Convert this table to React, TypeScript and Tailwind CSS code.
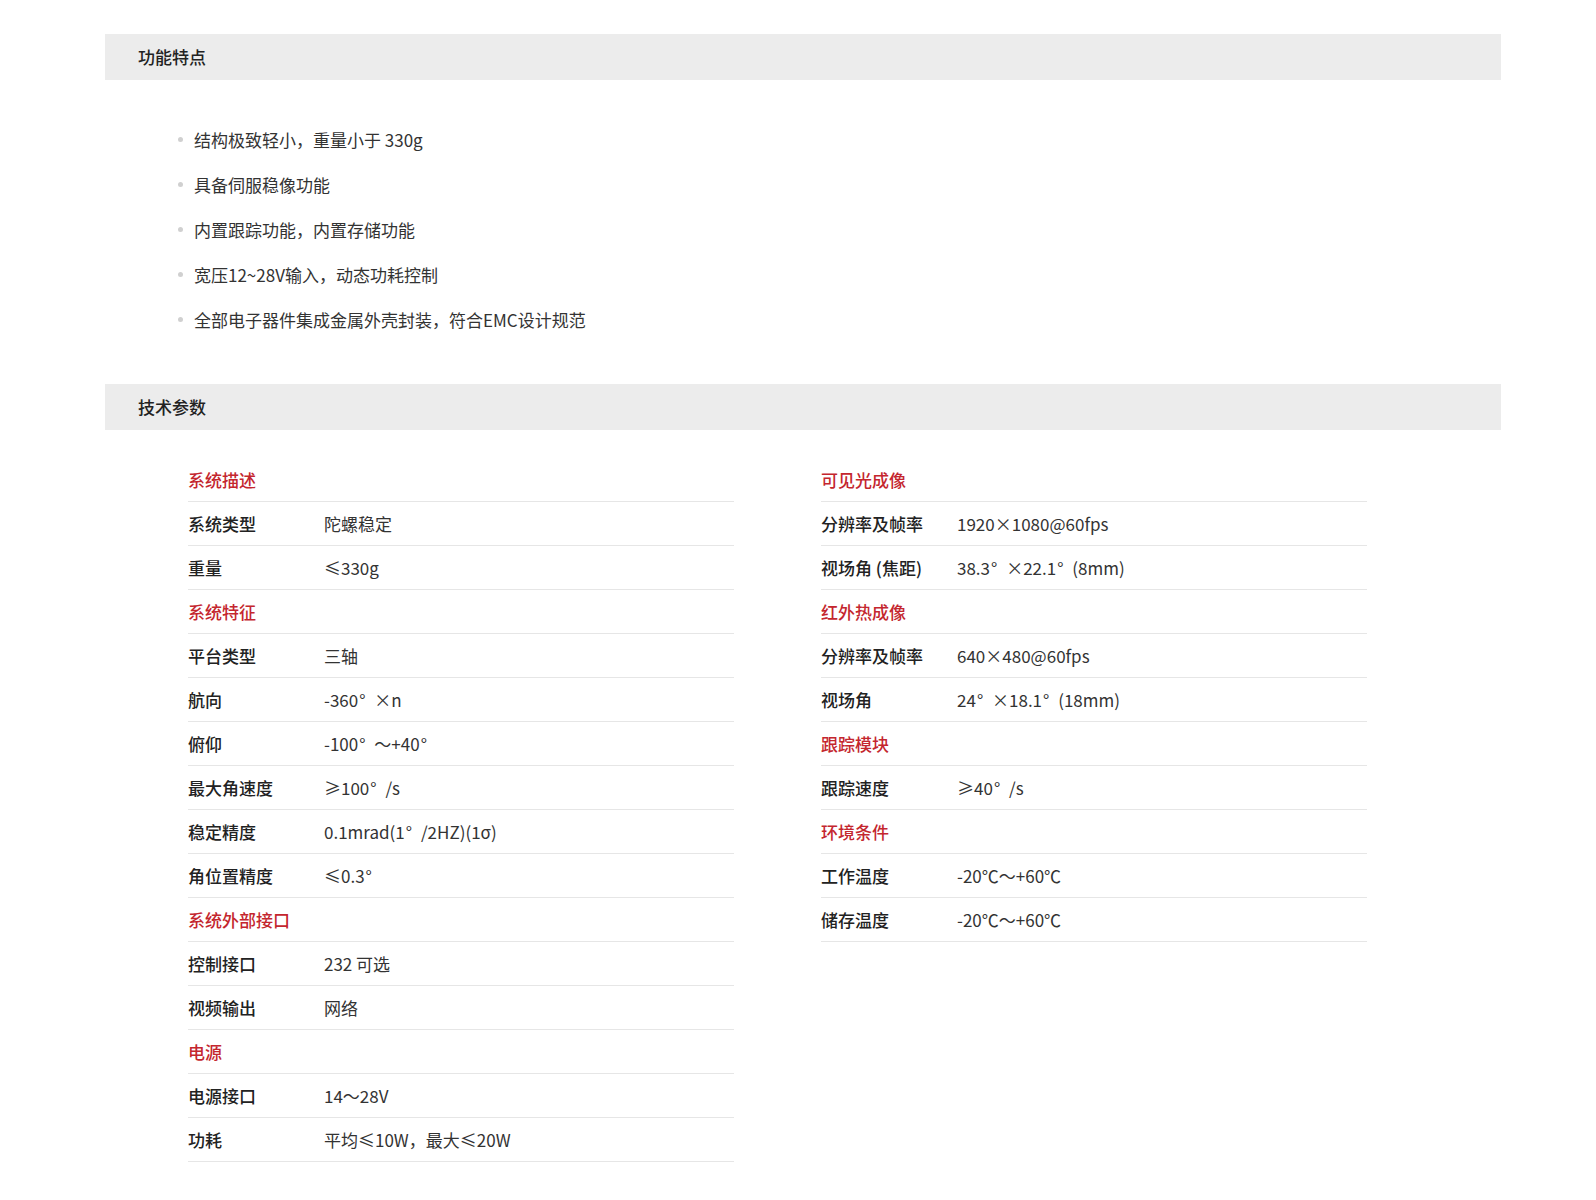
import React from "react";

type Row = { cat?: string; k?: string; v?: string };

const left: Row[] = [
  { cat: "系统描述" },
  { k: "系统类型", v: "陀螺稳定" },
  { k: "重量", v: "≤330g" },
  { cat: "系统特征" },
  { k: "平台类型", v: "三轴" },
  { k: "航向", v: "-360°×n" },
  { k: "俯仰", v: "-100°～+40°" },
  { k: "最大角速度", v: "≥100°/s" },
  { k: "稳定精度", v: "0.1mrad(1°/2HZ)(1σ)" },
  { k: "角位置精度", v: "≤0.3°" },
  { cat: "系统外部接口" },
  { k: "控制接口", v: "232 可选" },
  { k: "视频输出", v: "网络" },
  { cat: "电源" },
  { k: "电源接口", v: "14～28V" },
  { k: "功耗", v: "平均≤10W，最大≤20W" },
];

const right: Row[] = [
  { cat: "可见光成像" },
  { k: "分辨率及帧率", v: "1920×1080@60fps" },
  { k: "视场角 (焦距)", v: "38.3°×22.1°(8mm)" },
  { cat: "红外热成像" },
  { k: "分辨率及帧率", v: "640×480@60fps" },
  { k: "视场角", v: "24°×18.1°(18mm)" },
  { cat: "跟踪模块" },
  { k: "跟踪速度", v: "≥40°/s" },
  { cat: "环境条件" },
  { k: "工作温度", v: "-20℃～+60℃" },
  { k: "储存温度", v: "-20℃～+60℃" },
];

const features = [
  "结构极致轻小，重量小于 330g",
  "具备伺服稳像功能",
  "内置跟踪功能，内置存储功能",
  "宽压12~28V输入，动态功耗控制",
  "全部电子器件集成金属外壳封装，符合EMC设计规范",
];

function Value({ text }: { text: string }) {
  const parts = text.split("°");
  return (
    <>
      {parts.map((p, i) => (
        <React.Fragment key={i}>
          {p}
          {i < parts.length - 1 && (
            <span className="inline-block w-[0.95em] pl-[1px] text-left">°</span>
          )}
        </React.Fragment>
      ))}
    </>
  );
}

function Table({ rows }: { rows: Row[] }) {
  return (
    <div className="w-[546px] flex flex-col">
      {rows.map((r, i) =>
        r.cat ? (
          <div
            key={i}
            className="h-[44px] flex items-center border-b border-[#e6e6e6] text-[17px] font-medium text-[#c4262e]"
          >
            {r.cat}
          </div>
        ) : (
          <div
            key={i}
            className="h-[44px] flex items-center border-b border-[#e6e6e6] text-[17px]"
          >
            <div className="w-[136px] shrink-0 font-medium text-[#222]">{r.k}</div>
            <div className="text-[#333]">
              <Value text={r.v || ""} />
            </div>
          </div>
        )
      )}
    </div>
  );
}

export default function App() {
  return (
    <div
      className="bg-white w-full min-h-[1200px]"
      style={{ fontFamily: '"Noto Sans CJK SC", "Noto Sans", sans-serif' }}
    >
      <div className="ml-[105px] w-[1396px] pt-[34px]">
        <div className="h-[46px] bg-[#ececec] flex items-center pl-[33px] text-[17px] font-medium text-[#222]">
          功能特点
        </div>
        <ul className="mt-[37px] flex flex-col">
          {features.map((f, i) => (
            <li key={i} className="h-[45px] flex items-center text-[17px] text-[#333]">
              <span className="ml-[73px] w-[5px] h-[5px] rounded-full bg-[#d0d0d0] shrink-0"></span>
              <span className="ml-[11px]">{f}</span>
            </li>
          ))}
        </ul>
        <div className="mt-[42px] h-[46px] bg-[#ececec] flex items-center pl-[33px] text-[17px] font-medium text-[#222]">
          技术参数
        </div>
        <div className="mt-[28px] pl-[83px] flex gap-[87px] items-start">
          <Table rows={left} />
          <Table rows={right} />
        </div>
      </div>
    </div>
  );
}
